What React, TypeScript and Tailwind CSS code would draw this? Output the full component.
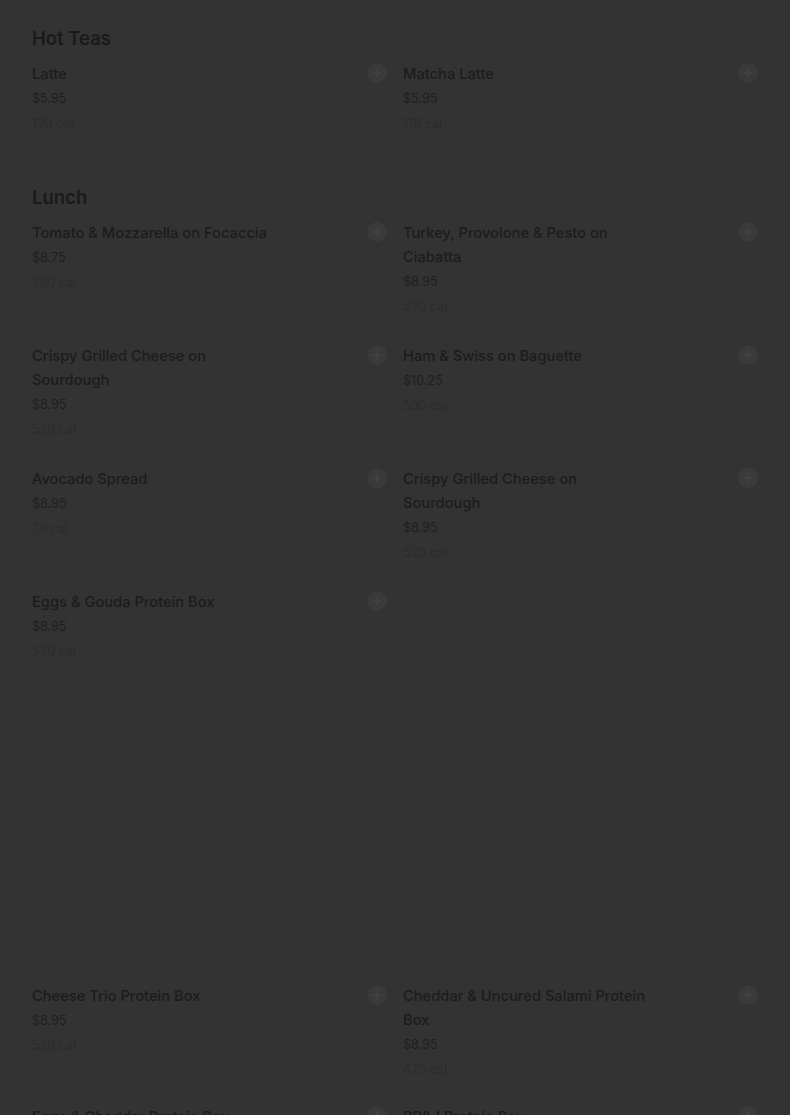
import React from "react";

type Item = { name: string; price: string; cal: string };

const hotTeas: Item[] = [
  { name: "Latte", price: "$5.95", cal: "120 cal" },
  { name: "Matcha Latte", price: "$5.95", cal: "110 cal" },
];

const lunchTop: Item[] = [
  { name: "Tomato & Mozzarella on Focaccia", price: "$8.75", cal: "360 cal" },
  { name: "Turkey, Provolone & Pesto on Ciabatta", price: "$8.95", cal: "520 cal" },
  { name: "Crispy Grilled Cheese on Sourdough", price: "$8.95", cal: "520 cal" },
  { name: "Ham & Swiss on Baguette", price: "$10.25", cal: "500 cal" },
  { name: "Avocado Spread", price: "$8.95", cal: "70 cal" },
  { name: "Crispy Grilled Cheese on Sourdough", price: "$8.95", cal: "520 cal" },
  { name: "Eggs & Gouda Protein Box", price: "$8.95", cal: "530 cal" },
];

const lunchBottom: Item[] = [
  { name: "Cheese Trio Protein Box", price: "$8.95", cal: "520 cal" },
  { name: "Cheddar & Uncured Salami Protein Box", price: "$8.95", cal: "470 cal" },
  { name: "Eggs & Cheddar Protein Box", price: "$8.95", cal: "460 cal" },
  { name: "PB&J Protein Box", price: "$8.95", cal: "520 cal" },
];

function PlusButton() {
  return (
    <button className="w-5 h-5 shrink-0 rounded-full bg-[#3a3a3a] flex items-center justify-center mt-px">
      <svg width="10" height="10" viewBox="0 0 10 10">
        <path d="M5 1v8M1 5h8" stroke="#444444" strokeWidth="1.6" strokeLinecap="round" />
      </svg>
    </button>
  );
}

function MenuItem({ item }: { item: Item }) {
  return (
    <div className="flex justify-between items-start">
      <div className="w-[252px]">
        <p className="text-[14.7px] leading-6 font-medium text-[#1c1c1c]">{item.name}</p>
        <p className="text-[12.6px] leading-[25px] text-[#1f1f1f]">{item.price}</p>
        <p className="text-[12.6px] leading-[25px] text-[#2c2c2c]">{item.cal}</p>
      </div>
      <PlusButton />
    </div>
  );
}

export default function App() {
  return (
    <div
      className="bg-[#333333] px-8 pt-6 overflow-hidden h-[1115px]"
      style={{ fontFamily: "Inter, 'Noto Sans', sans-serif" }}
    >
      <h2 className="text-[18.5px] leading-7 font-semibold text-[#1a1a1a] mb-[10px]">Hot Teas</h2>
      <div className="grid grid-cols-2 gap-x-4">
        {hotTeas.map((it) => (
          <MenuItem key={it.name} item={it} />
        ))}
      </div>
      <div className="h-px bg-[#2f2f2f] mt-[19px] mb-[27px]" />

      <h2 className="text-[18.5px] leading-7 font-semibold text-[#1a1a1a] mb-[10px]">Lunch</h2>
      <div className="grid grid-cols-2 gap-x-4 gap-y-[25px]">
        {lunchTop.map((it, i) => (
          <MenuItem key={i} item={it} />
        ))}
      </div>
      <div className="grid grid-cols-2 gap-x-4 gap-y-[23px] mt-[320px]">
        {lunchBottom.map((it, i) => (
          <MenuItem key={i} item={it} />
        ))}
      </div>
    </div>
  );
}
